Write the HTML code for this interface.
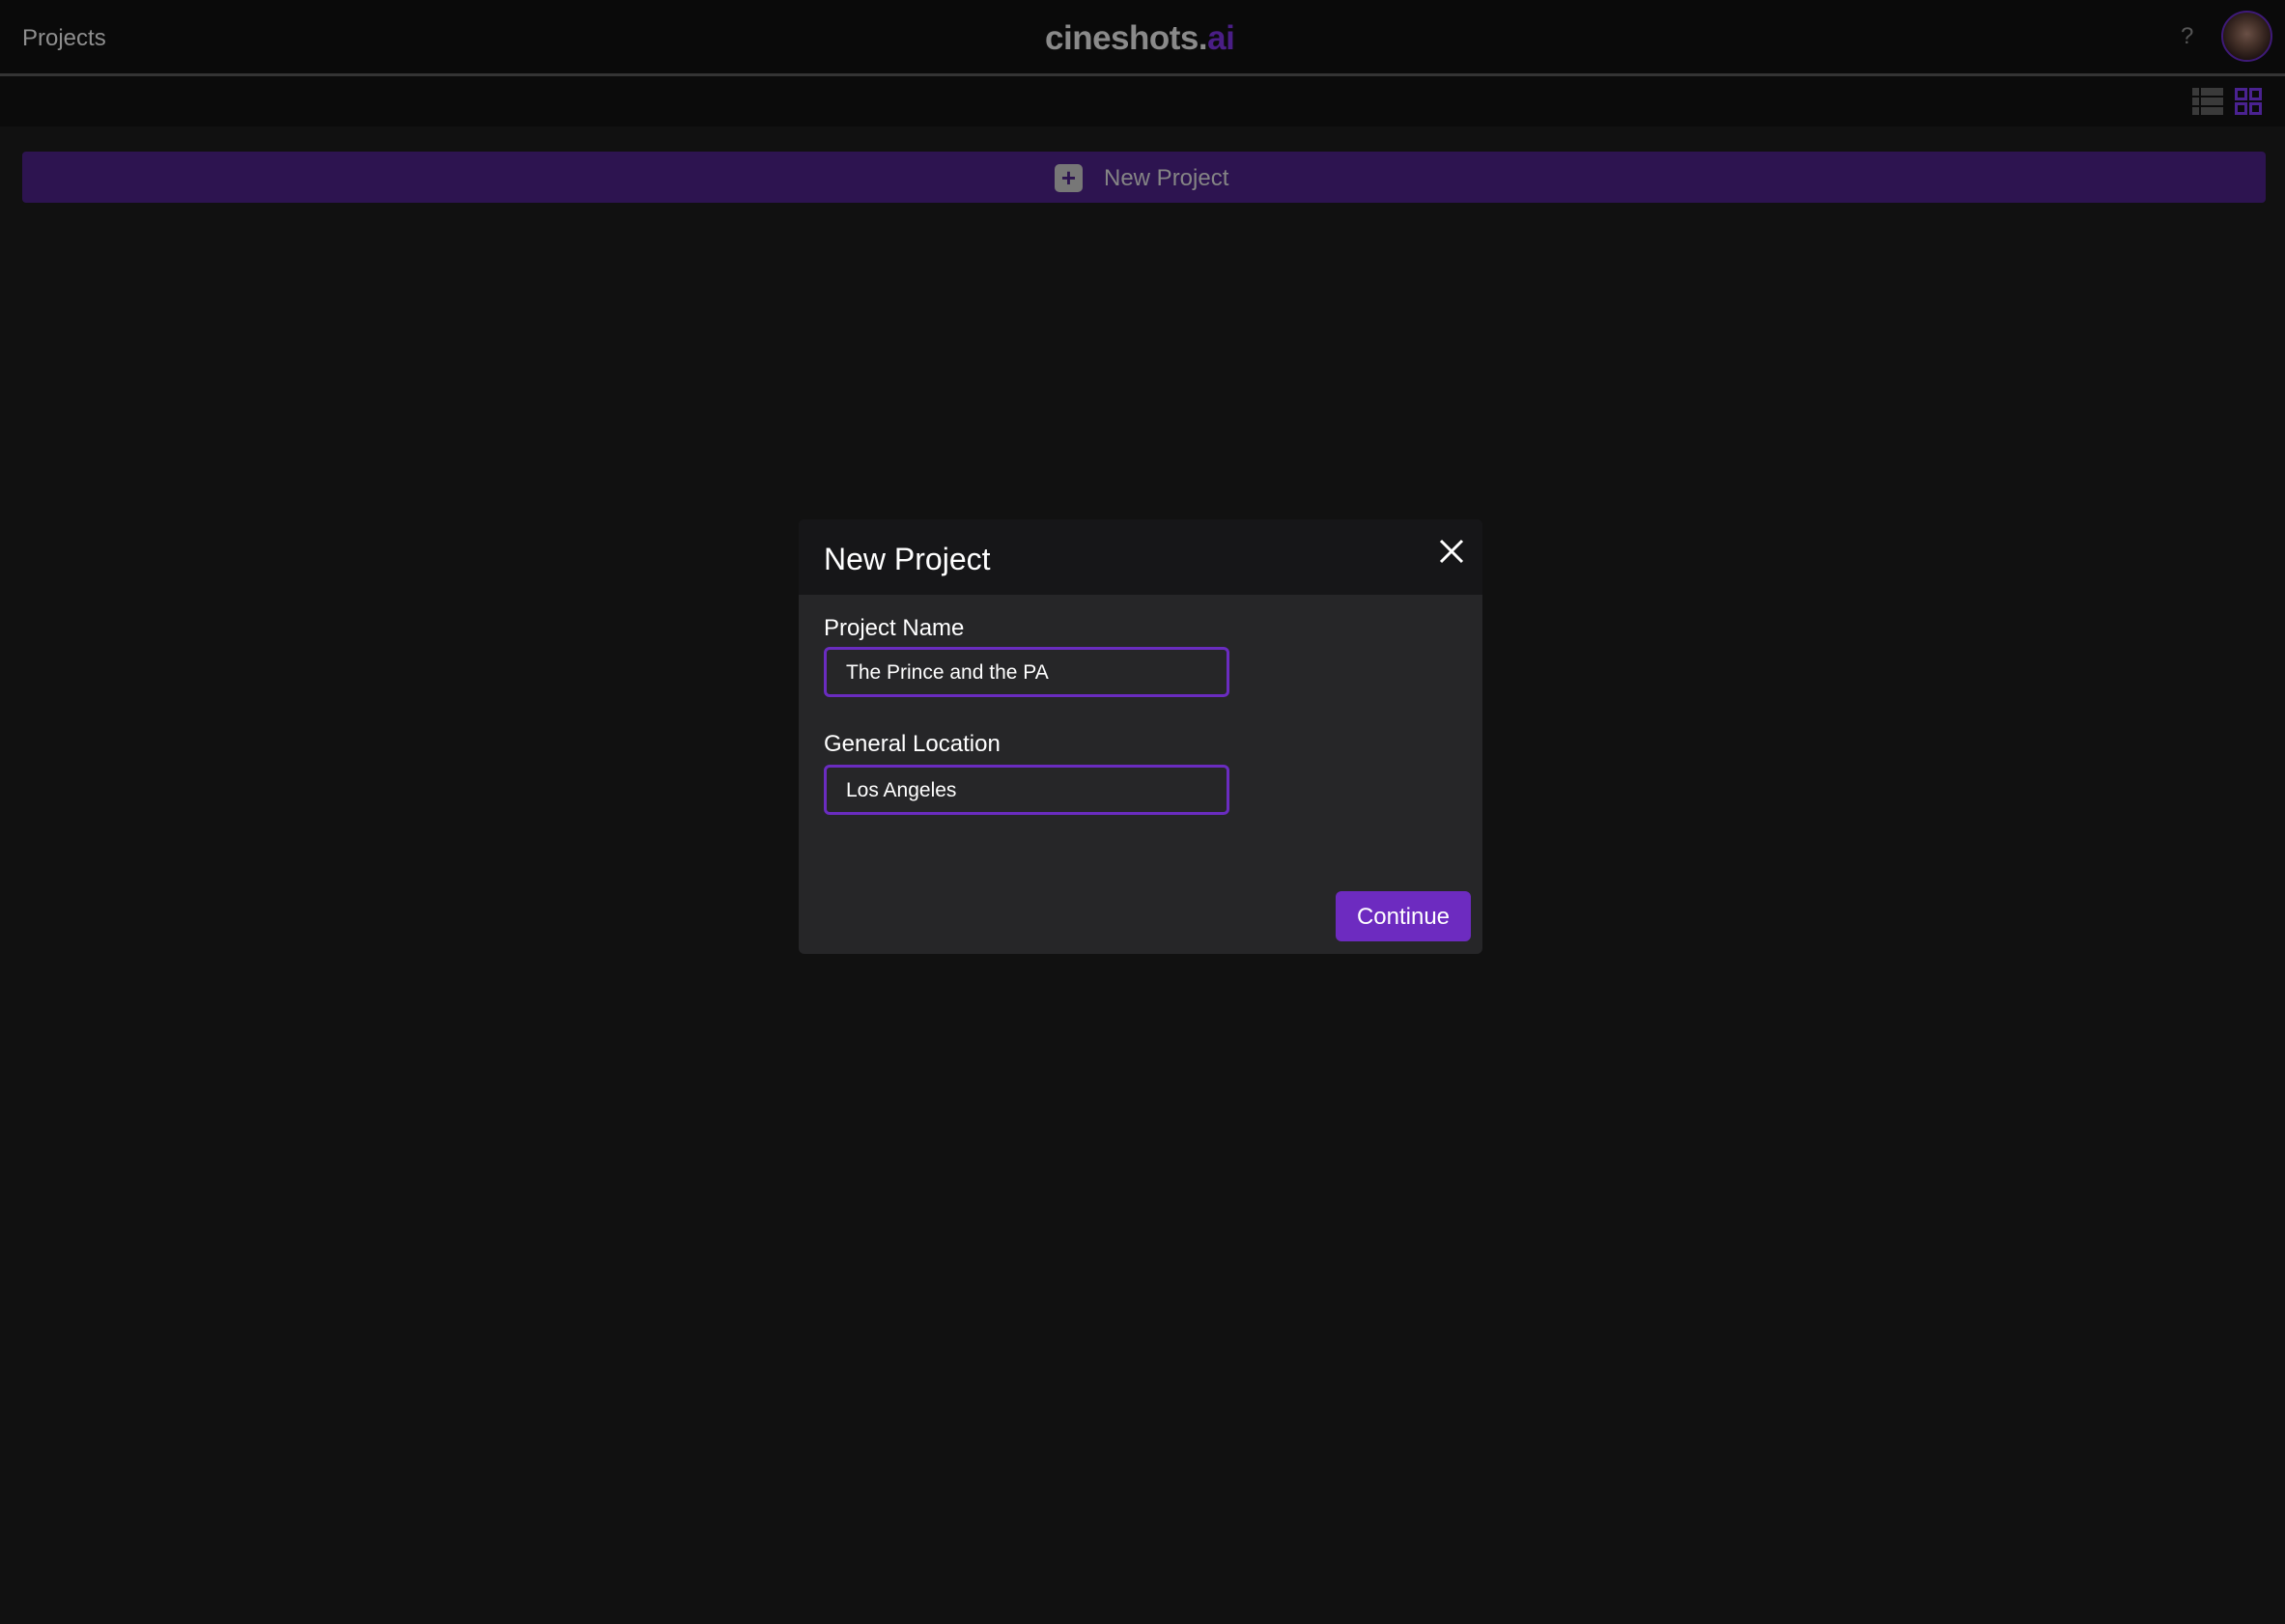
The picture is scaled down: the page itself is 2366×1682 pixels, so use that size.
<!DOCTYPE html>
<html><head><meta charset="utf-8"><style>
*{margin:0;padding:0;box-sizing:border-box}
body{width:2366px;height:1682px;background:#111111;font-family:"Liberation Sans",sans-serif;position:relative;overflow:hidden}
.abs{position:absolute}
</style></head><body>
<div class="abs" style="left:0;top:0;width:2366px;height:76px;background:#0a0a0a"></div>
<div class="abs" style="left:0;top:76px;width:2366px;height:3px;background:#343434"></div>
<div class="abs" style="left:0;top:79px;width:2366px;height:52px;background:#0b0b0b"></div>
<div class="abs" style="left:23px;top:26px;font-size:24px;color:#8e8e8e">Projects</div>
<div class="abs" style="left:1082px;top:20px;font-size:35px;font-weight:bold;color:#8a8a8a;letter-spacing:-0.5px">cineshots.<span style="color:#4a1e86">ai</span></div>
<div class="abs" style="left:2258px;top:24px;font-size:24px;color:#555">?</div>
<div class="abs" style="left:2300px;top:11px;width:53px;height:53px;border-radius:50%;border:2px solid #3e1a78;background:radial-gradient(circle at 50% 45%,#6a5046 0,#46322a 35%,#221614 70%,#140e0e 100%)"></div>
<svg class="abs" style="left:2270px;top:91px" width="32" height="28" viewBox="0 0 32 28">
<g fill="#3a3a3a"><rect x="0" y="0" width="7" height="8"/><rect x="9" y="0" width="23" height="8"/><rect x="0" y="10" width="7" height="8"/><rect x="9" y="10" width="23" height="8"/><rect x="0" y="20" width="7" height="8"/><rect x="9" y="20" width="23" height="8"/></g></svg>
<svg class="abs" style="left:2314px;top:91px" width="28" height="28" viewBox="0 0 28 28">
<g fill="none" stroke="#4a2290" stroke-width="3"><rect x="1.5" y="1.5" width="10" height="10"/><rect x="16.5" y="1.5" width="10" height="10"/><rect x="1.5" y="16.5" width="10" height="10"/><rect x="16.5" y="16.5" width="10" height="10"/></g></svg>
<div class="abs" style="left:23px;top:157px;width:2323px;height:53px;background:#2d1450;border-radius:4px"></div>
<div class="abs" style="left:1092px;top:170px;width:29px;height:29px;background:#777;border-radius:5px;color:#2d1450;font-size:26px;line-height:29px;text-align:center;font-weight:bold">+</div>
<div class="abs" style="left:1143px;top:171px;font-size:24px;color:#858585">New Project</div>

<div class="abs" style="left:827px;top:538px;width:708px;height:450px;background:#262628;border-radius:6px;overflow:hidden">
<div style="height:78px;background:#161618"></div>
</div>
<div class="abs" style="left:853px;top:561px;font-size:32px;color:#fff">New Project</div>
<svg class="abs" style="left:1490px;top:558px" width="26" height="26" viewBox="0 0 26 26"><path d="M2 2L24 24M24 2L2 24" stroke="#fff" stroke-width="3"/></svg>
<div class="abs" style="left:853px;top:637px;font-size:24px;color:#fff">Project Name</div>
<div class="abs" style="left:853px;top:670px;width:420px;height:52px;border:3px solid #6a2cc0;border-radius:6px"></div>
<div class="abs" style="left:876px;top:685px;font-size:21px;color:#fff">The Prince and the PA</div>
<div class="abs" style="left:853px;top:757px;font-size:24px;color:#fff">General Location</div>
<div class="abs" style="left:853px;top:792px;width:420px;height:52px;border:3px solid #6a2cc0;border-radius:6px"></div>
<div class="abs" style="left:876px;top:807px;font-size:21px;color:#fff">Los Angeles</div>
<div class="abs" style="left:1383px;top:923px;width:140px;height:52px;background:#6d2bc0;border-radius:6px;color:#fff;font-size:24px;line-height:54px;text-align:center">Continue</div>
</body></html>
